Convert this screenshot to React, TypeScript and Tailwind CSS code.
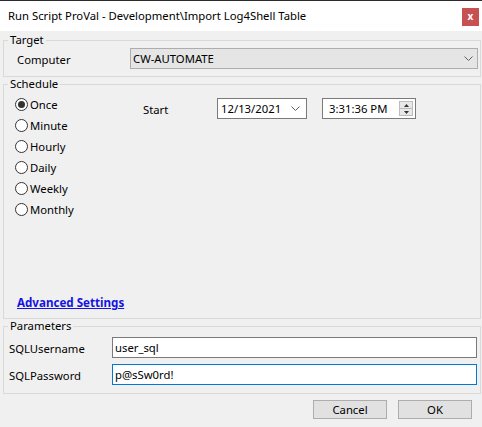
import React from "react";

const font = { fontFamily: "'Noto Sans', 'Liberation Sans', sans-serif" };

function Radio({ label, checked }: { label: string; checked?: boolean }) {
  return (
    <div className="flex h-[21px] items-center">
      <span className="flex h-[13px] w-[13px] items-center justify-center rounded-full border border-[#333333] bg-white">
        {checked && <span className="h-[7px] w-[7px] rounded-full bg-[#333333]" />}
      </span>
      <span className="ml-[2px] text-black">{label}</span>
    </div>
  );
}

function Chevron({ className }: { className?: string }) {
  return (
    <svg className={className} width="9" height="5" viewBox="0 0 9 5" fill="none">
      <path d="M0.5 0.5 L4.5 4.5 L8.5 0.5" stroke="#606060" strokeWidth="1" />
    </svg>
  );
}

function Group({ title, children, className }: { title: string; children: React.ReactNode; className?: string }) {
  return (
    <fieldset className={"ml-[3px] mr-[1px] border border-[#d9d9d9] " + (className || "")}>
      <legend className="ml-[4px] px-[2px] leading-[14px] text-black">{title}</legend>
      {children}
    </fieldset>
  );
}

export default function App() {
  const schedules = ["Once", "Minute", "Hourly", "Daily", "Weekly", "Monthly"];

  return (
    <div className="flex h-[427px] w-[482px] flex-col bg-[#f0f0f0] text-[11.3px] leading-[16px]" style={font}>
      {/* title bar */}
      <div className="flex h-[31px] items-center justify-between border-t border-[#2b2b2b] bg-white pl-[8px] pr-[3px]">
        <span className="text-[11.3px] text-black">
          Run Script ProVal - Development\Import Log4Shell Table
        </span>
        <span className="mt-[2px] flex h-[18px] w-[17px] items-center justify-center bg-[#c75050] pb-[2px] text-[10px] font-bold leading-none text-white">
          x
        </span>
      </div>

      <Group title="Target" className="mt-[2px] pb-[7px]">
        <div className="mt-[1px] flex items-center">
          <span className="w-[126px] pl-[13px] pt-[2px] text-black">Computer</span>
          <div className="flex h-[21px] w-[348px] items-center justify-between border border-[#adadad] bg-[#e5e5e5] pl-[2px] pr-[4px]">
            <span className="text-black">CW-AUTOMATE</span>
            <Chevron />
          </div>
        </div>
      </Group>

      <Group title="Schedule" className="pb-[7px]">
        <div className="flex pt-[3px]">
          <div className="w-[139px] pl-[11px]">
            {schedules.map((s) => (
              <Radio key={s} label={s} checked={s === "Once"} />
            ))}
          </div>
          <div className="mt-[4px] flex h-[21px] items-start">
            <span className="w-[74px] pt-[4px] text-black">Start</span>
            <div className="flex h-[21px] w-[90px] items-center justify-between border border-[#7a7a7a] bg-white pl-[3px] pr-[6px]">
              <span className="text-black">12/13/2021</span>
              <Chevron />
            </div>
            <div className="ml-[15px] flex h-[21px] w-[94px] items-center justify-between border border-[#7a7a7a] bg-white pl-[6px] pr-[2px]">
              <span className="text-black">3:31:36 PM</span>
              <div className="flex h-[15px] w-[14px] flex-col border border-[#bcbcbc] bg-[#e8e8e8]">
                <div className="flex flex-1 items-center justify-center border-b border-[#bcbcbc]">
                  <svg width="5" height="3" viewBox="0 0 5 3">
                    <path d="M0 3 L2.5 0 L5 3 Z" fill="#333" />
                  </svg>
                </div>
                <div className="flex flex-1 items-center justify-center">
                  <svg width="5" height="3" viewBox="0 0 5 3">
                    <path d="M0 0 L2.5 3 L5 0 Z" fill="#333" />
                  </svg>
                </div>
              </div>
            </div>
          </div>
        </div>
        <div className="mt-[75px] pl-[13px]">
          <span className="text-[11.6px] font-bold text-[#1414e0] underline">Advanced Settings</span>
        </div>
      </Group>

      <Group title="Parameters" className="pb-[8px]">
        <div className="mt-[4px] flex items-center">
          <span className="w-[108px] pl-[5px] pt-[2px] text-black">SQLUsername</span>
          <div className="flex h-[21px] w-[365px] items-center border border-[#7a7a7a] bg-white pl-[2px]">
            <span className="text-black">user_sql</span>
          </div>
        </div>
        <div className="mt-[6px] flex items-center">
          <span className="w-[108px] pl-[5px] pt-[2px] text-black">SQLPassword</span>
          <div className="flex h-[21px] w-[365px] items-center border border-[#0078d7] bg-white pl-[2px]">
            <span className="text-black">p@sSw0rd!</span>
          </div>
        </div>
      </Group>

      <div className="mt-[6px] flex justify-end gap-[11px] pr-[10px]">
        <button className="flex h-[19px] w-[74px] items-center justify-center border border-[#adadad] bg-[#e1e1e1] text-black">
          Cancel
        </button>
        <button className="flex h-[19px] w-[74px] items-center justify-center border border-[#adadad] bg-[#e1e1e1] text-black">
          OK
        </button>
      </div>
    </div>
  );
}
